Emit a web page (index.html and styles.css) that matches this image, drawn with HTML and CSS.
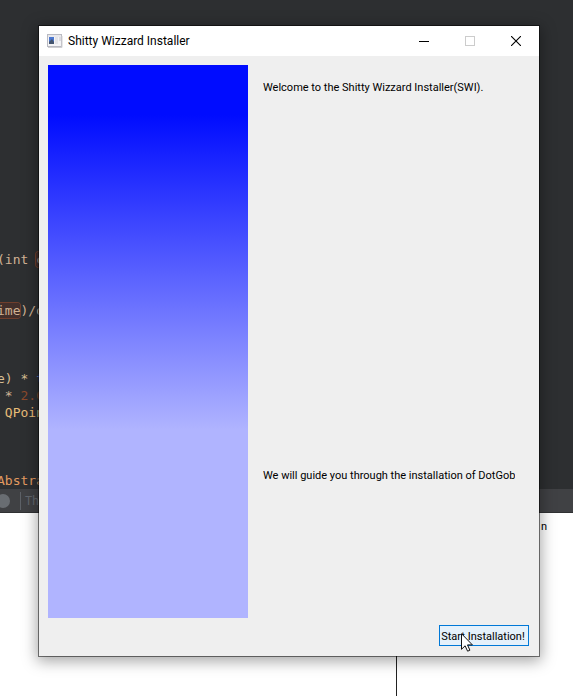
FILE: index.html
```html
<!DOCTYPE html>
<html lang="en">
<head>
<meta charset="utf-8">
<title>Shitty Wizzard Installer</title>
<link rel="stylesheet" href="styles.css">
</head>
<body>
<main class="desktop">
  <section class="editor">
<pre class="code">(int <span class="mark">c</span>


<span class="mark">ime</span>)/d



<span class="sand">e) *</span> <span class="blue">t</span>
 * <span class="num">2.0</span>
 <span class="gold">QPoin</span>



<span class="type">Abstra</span></pre>
    <div class="status"><span class="dot"></span><span class="hint">Thr</span></div>
  </section>
  <section class="panes">
    <div class="pane"></div>
    <div class="pane side"><span>n</span></div>
  </section>

  <section class="window">
    <header class="titlebar">
      <svg class="app-icon" width="16" height="14" viewBox="0 0 16 14">
        <rect x="0.5" y="0.5" width="14" height="12" fill="#f4f4f6" stroke="#b9bac2"/>
        <path d="M1 2h13" stroke="#dddde3"/>
        <path d="M15 2v11.5H1" fill="none" stroke="#cfcfd2"/>
        <rect x="2" y="3" width="5" height="7" fill="#4c78d0"/>
        <path d="M2 10V8l3-3 2 3v2z" fill="#44556f"/>
        <rect x="8" y="3" width="3" height="7" fill="#e4e4e8"/>
        <rect x="12" y="3" width="2" height="4" fill="#dcdce2"/>
      </svg>
      <h1 class="title">Shitty Wizzard Installer</h1>
      <button class="control" aria-label="Minimize"><svg width="10" height="10" viewBox="0 0 10 10" shape-rendering="crispEdges"><path d="M0 5.5h10" stroke="#000"/></svg></button>
      <button class="control" aria-label="Maximize" disabled><svg width="10" height="10" viewBox="0 0 10 10"><rect x="0.5" y="0.5" width="9" height="9" fill="none" stroke="#ccc"/></svg></button>
      <button class="control" aria-label="Close"><svg width="10" height="10" viewBox="0 0 10 10"><path d="M0 0l10 10M10 0L0 10" stroke="#000" stroke-width="1.1"/></svg></button>
    </header>
    <div class="content">
      <div class="banner"></div>
      <div class="messages">
        <p>Welcome to the Shitty Wizzard Installer(SWI).</p>
        <p>We will guide you through the installation of DotGobbler</p>
      </div>
    </div>
    <footer class="actions">
      <button class="start">Start Installation!</button>
      <svg class="cursor" width="12" height="19" viewBox="0 0 12 19"><path d="M0.5 0.7v15.6l3.6-3.5 2.5 5.4 2.3-1-2.4-5.3h4.9z" fill="#fff" stroke="#111"/></svg>
    </footer>
  </section>
</main>
</body>
</html>
```
FILE: styles.css
```css
* { box-sizing: border-box; }

body {
  margin: 0;
  font-family: Roboto, "Liberation Sans", sans-serif;
}

.desktop {
  position: relative;
  display: flex;
  flex-direction: column;
  min-height: 100vh;
  overflow: hidden;
  background: #fff;
}

.editor {
  background: #2d2f31;
  overflow: hidden;
}

.code {
  margin: 0 0 0 -3px;
  padding-top: 251px;
  font: 13px/17px "DejaVu Sans Mono", monospace;
  color: #d0b294;
}

.mark {
  border-radius: 3px;
  background: #432f2b;
  box-shadow: 0 0 0 1px #703e2c;
}

.sand { color: #d6bc92; }
.gold { color: #e8bd78; }
.type { color: #e29a60; }
.num { color: #8c4a2c; }
.blue { color: #6585d8; }

.status {
  display: flex;
  align-items: center;
  height: 24px;
  border-bottom: 1px solid #303133;
  background: #404144;
}

.dot {
  width: 14px;
  height: 14px;
  margin-left: -4px;
  border-radius: 50%;
  background: #696d72;
}

.hint {
  margin-left: 10px;
  padding-left: 4px;
  border-left: 1px solid #5e6268;
  font-size: 12px;
  line-height: 18px;
  color: #62676e;
}

.panes {
  display: flex;
  flex: 1;
}

.pane {
  flex: 0 0 396px;
}

.side {
  flex: 1;
  padding: 6px 26px;
  border-left: 1px solid #222;
  font-size: 11px;
  line-height: 16px;
  text-align: right;
}

.window {
  position: absolute;
  inset: 26px 34px 40px 39px;
  display: flex;
  flex-direction: column;
  background: #efefef;
  box-shadow: 0 0 0 1px rgba(0, 0, 0, 0.5), 0 3px 14px 2px rgba(0, 0, 0, 0.36);
}

.titlebar {
  display: flex;
  align-items: center;
  height: 30px;
  padding-left: 8px;
  background: #fff;
}

.title {
  flex: 1;
  margin: 0 0 0 5px;
  font-size: 12px;
  font-weight: 400;
  line-height: 16px;
}

.control {
  display: flex;
  align-items: center;
  justify-content: center;
  width: 46px;
  height: 28px;
  padding: 0;
  border: 0;
  background: transparent;
}

.content {
  display: flex;
  flex: 1;
  gap: 15px;
  padding: 9px 24px 7px 9px;
}

.banner {
  flex: 0 0 200px;
  background: linear-gradient(#000cff 0%, #000cff 9%, #b0b4ff 66%);
}

.messages {
  display: flex;
  flex: 1;
  flex-direction: column;
  justify-content: space-between;
  min-width: 0;
  padding: 15px 0 134px;
}

.messages p {
  margin: 0;
  overflow: hidden;
  white-space: nowrap;
  font-size: 11px;
  line-height: 16px;
}

.actions {
  position: relative;
  display: flex;
  justify-content: flex-end;
  padding: 0 10px 10px;
}

.start {
  width: 90px;
  height: 21px;
  padding: 2px 2px 0 0;
  border: 1px solid #0078d7;
  background: #e5f1fb;
  font: 11px/16px Roboto, "Liberation Sans", sans-serif;
  white-space: nowrap;
  color: #000;
}

.cursor {
  position: absolute;
  right: 66px;
  bottom: 4px;
}
```
